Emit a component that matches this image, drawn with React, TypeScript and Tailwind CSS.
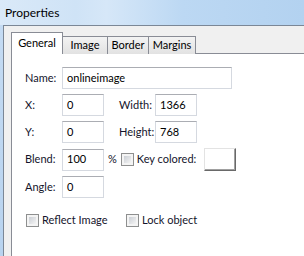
const font = "font-['Segoe_UI',Lato,sans-serif]";

function TextBox({ value, w }: { value: string; w: string }) {
  return (
    <div
      className={`${w} h-[22px] flex items-center bg-white border border-[#d5d9e0] border-t-[#abadb3] pl-[4px] text-[11px] text-black`}
    >
      {value}
    </div>
  );
}

function CheckBox() {
  return (
    <div className="w-[13px] h-[13px] border border-[#8e8f8f] bg-[#f4f4f4] p-[2px] shrink-0">
      <div className="w-full h-full bg-gradient-to-br from-[#cbcfd5] to-[#f4f4f4]" />
    </div>
  );
}

const tabs = [
  { name: "Image", w: "w-[45px]" },
  { name: "Border", w: "w-[41px]" },
  { name: "Margins", w: "w-[47px]" },
];

export default function App() {
  return (
    <div className={`w-[304px] h-[256px] overflow-hidden flex flex-col ${font} text-[#14142b]`}>
      {/* Title bar */}
      <div className="h-[25px] shrink-0 flex items-center pl-[5px] bg-[linear-gradient(90deg,#dae9f8_0%,#cfe3f6_25%,#d6e7f8_35%,#bcd8f3_60%,#b3d2f0_100%)]">
        <span className="text-[12px] text-black">Properties</span>
      </div>

      <div className="flex-1 flex min-h-0">
        {/* Window frame */}
        <div className="w-[3px] bg-gradient-to-b from-[#c4dbf3] to-[#b8d3ef]" />

        <div className="flex-1 flex flex-col bg-[#f0f0f0] border-t border-l border-[#7b8796] pl-[7px] pt-[7px]">
          {/* Tabs */}
          <div className="flex items-end h-[21px] -mb-px relative z-10 text-[11px] text-black">
            <div className="w-[52px] h-[22px] bg-white border border-b-0 border-[#898c95] flex items-center justify-center pb-[1px]">
              General
            </div>
            {tabs.map((t) => (
              <div
                key={t.name}
                className={`${t.w} h-[18px] border-t border-r border-[#898c95] bg-gradient-to-b from-[#f3f3f3] to-[#e2e2e2] flex items-center justify-center`}
              >
                {t.name}
              </div>
            ))}
          </div>

          {/* Panel */}
          <div className="flex-1 bg-white border-t border-l border-[#898c95] pl-[13px] pt-[13px] text-[11px]">
            <div className="flex flex-col gap-[5px]">
              <div className="flex items-center">
                <span className="w-[37px]">Name:</span>
                <TextBox value="onlineimage" w="w-[170px]" />
              </div>
              <div className="flex items-center">
                <span className="w-[37px]">X:</span>
                <TextBox value="0" w="w-[42px]" />
                <span className="w-[36px] ml-[15px]">Width:</span>
                <TextBox value="1366" w="w-[42px]" />
              </div>
              <div className="flex items-center">
                <span className="w-[37px]">Y:</span>
                <TextBox value="0" w="w-[42px]" />
                <span className="w-[36px] ml-[15px]">Height:</span>
                <TextBox value="768" w="w-[42px]" />
              </div>
              <div className="flex items-center">
                <span className="w-[37px]">Blend:</span>
                <TextBox value="100" w="w-[42px]" />
                <span className="ml-[4px]">%</span>
                <div className="ml-[4px] flex items-center gap-[3px]">
                  <CheckBox />
                  <span>Key colored:</span>
                </div>
                <div className="ml-[8px] w-[32px] h-[23px] bg-white border border-t-[#e3e3e3] border-l-[#e3e3e3] border-r-[#696969] border-b-[#696969] shadow-[inset_-1px_-1px_0_#a0a0a0]" />
              </div>
              <div className="flex items-center">
                <span className="w-[37px]">Angle:</span>
                <TextBox value="0" w="w-[42px]" />
              </div>
            </div>

            <div className="flex items-center mt-[14px] pl-[1px]">
              <div className="flex items-center gap-[3px] w-[100px]">
                <CheckBox />
                <span>Reflect Image</span>
              </div>
              <div className="flex items-center gap-[3px]">
                <CheckBox />
                <span>Lock object</span>
              </div>
            </div>
          </div>
        </div>
      </div>
    </div>
  );
}
